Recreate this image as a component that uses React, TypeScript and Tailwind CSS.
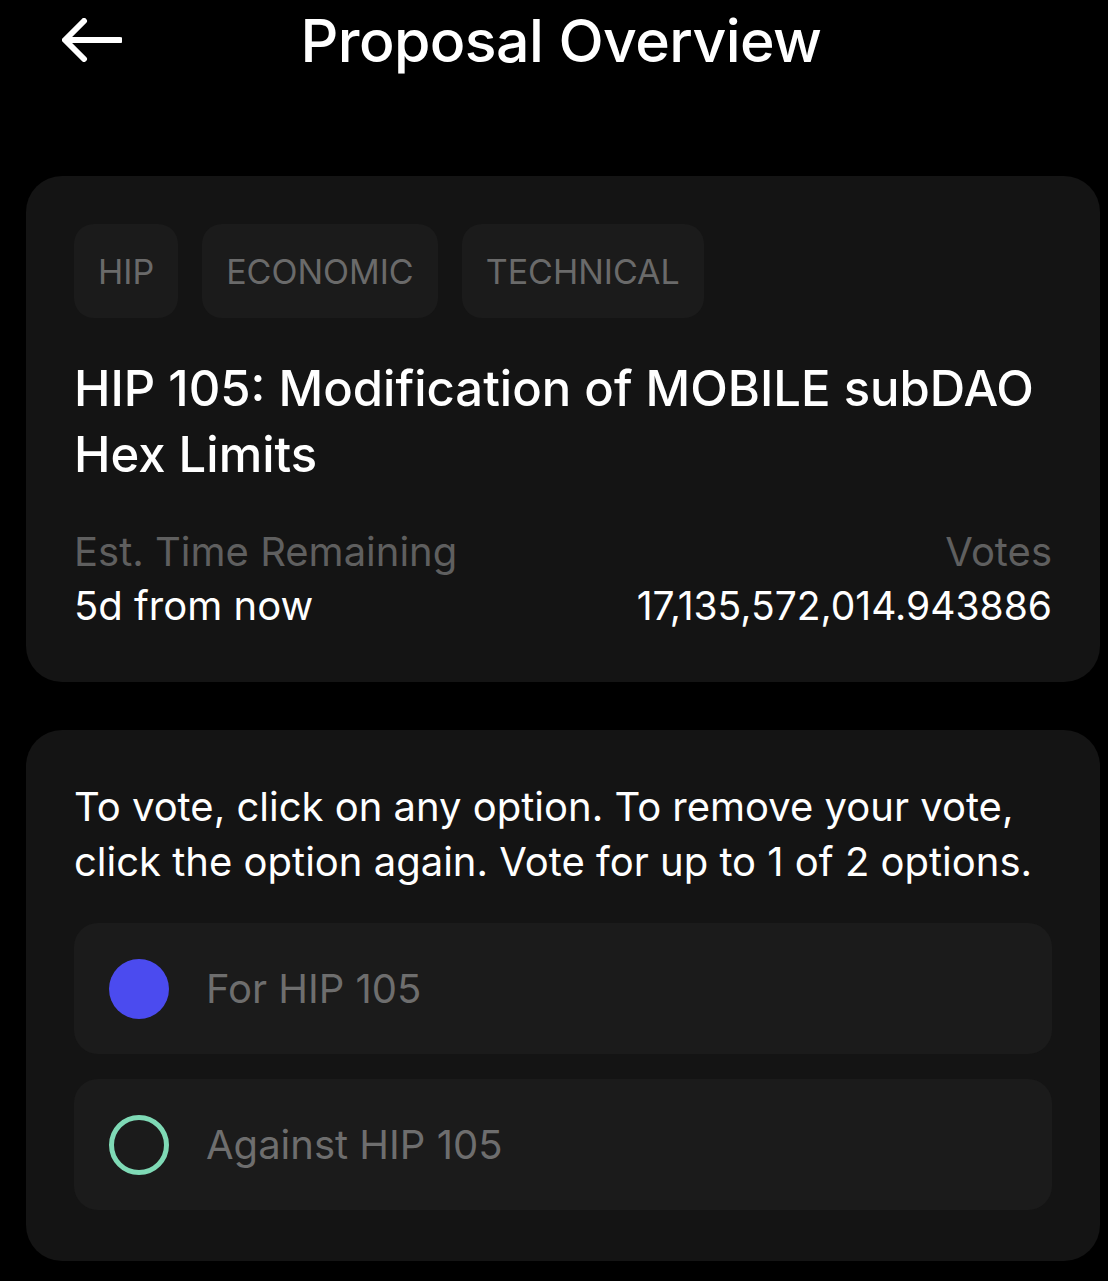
import React from "react";

export default function App() {
  const font = { fontFamily: "Inter, 'Noto Sans', sans-serif" };
  return (
    <div className="min-h-[1281px] w-full bg-black text-white" style={font}>
      <div className="flex h-[80px] items-center px-[62px]">
        <div className="w-[60px] shrink-0">
          <svg width="60" height="44" viewBox="0 0 60 44" fill="none">
            <path d="M58 22H4M22 3L3 22l19 19" stroke="white" strokeWidth="6" strokeLinecap="round" strokeLinejoin="round" />
          </svg>
        </div>
        <div className="flex-1 pr-[46px] text-center text-[59px] font-medium leading-none tracking-[-0.01em]">Proposal Overview</div>
      </div>

      <div className="px-[26px] pt-[96px] pr-[8px]">
        <div className="rounded-[36px] bg-[#141414] px-[48px] pt-[48px] pb-[49px]">
          <div className="flex gap-[24px]">
            {["HIP", "ECONOMIC", "TECHNICAL"].map((t) => (
              <div key={t} className="flex h-[94px] items-center rounded-[20px] bg-[#1b1b1b] px-[24px] text-[34px] text-[#6a6a6a]">
                {t}
              </div>
            ))}
          </div>
          <div className="mt-[38px] whitespace-nowrap text-[49px] font-medium leading-[66px]">
            HIP 105: Modification of MOBILE subDAO
            <br />
            Hex Limits
          </div>
          <div className="mt-[37px] flex justify-between text-[40px] leading-[54px]">
            <div>
              <div className="text-[#5f5f5f]">Est. Time Remaining</div>
              <div>5d from now</div>
            </div>
            <div className="text-right">
              <div className="text-[#5f5f5f]">Votes</div>
              <div className="text-[39px]">17,135,572,014.943886</div>
            </div>
          </div>
        </div>

        <div className="mt-[48px] rounded-[36px] bg-[#141414] px-[48px] pt-[49px] pb-[51px]">
          <div className="text-[40px] leading-[55px]">
            To vote, click on any option. To remove your vote, click the option again. Vote for up to 1 of 2 options.
          </div>
          <div className="mt-[34px] flex flex-col gap-[25px]">
            <div className="flex h-[131px] items-center gap-[37px] rounded-[24px] bg-[#1b1b1b] px-[35px]">
              <div className="h-[60px] w-[60px] rounded-full bg-[#4b4bef]" />
              <div className="text-[40px] text-[#6e6e6e]">For HIP 105</div>
            </div>
            <div className="flex h-[131px] items-center gap-[37px] rounded-[24px] bg-[#1b1b1b] px-[35px]">
              <div className="h-[60px] w-[60px] rounded-full border-[5px] border-[#7fdab6]" />
              <div className="text-[40px] text-[#6e6e6e]">Against HIP 105</div>
            </div>
          </div>
        </div>
      </div>
    </div>
  );
}
